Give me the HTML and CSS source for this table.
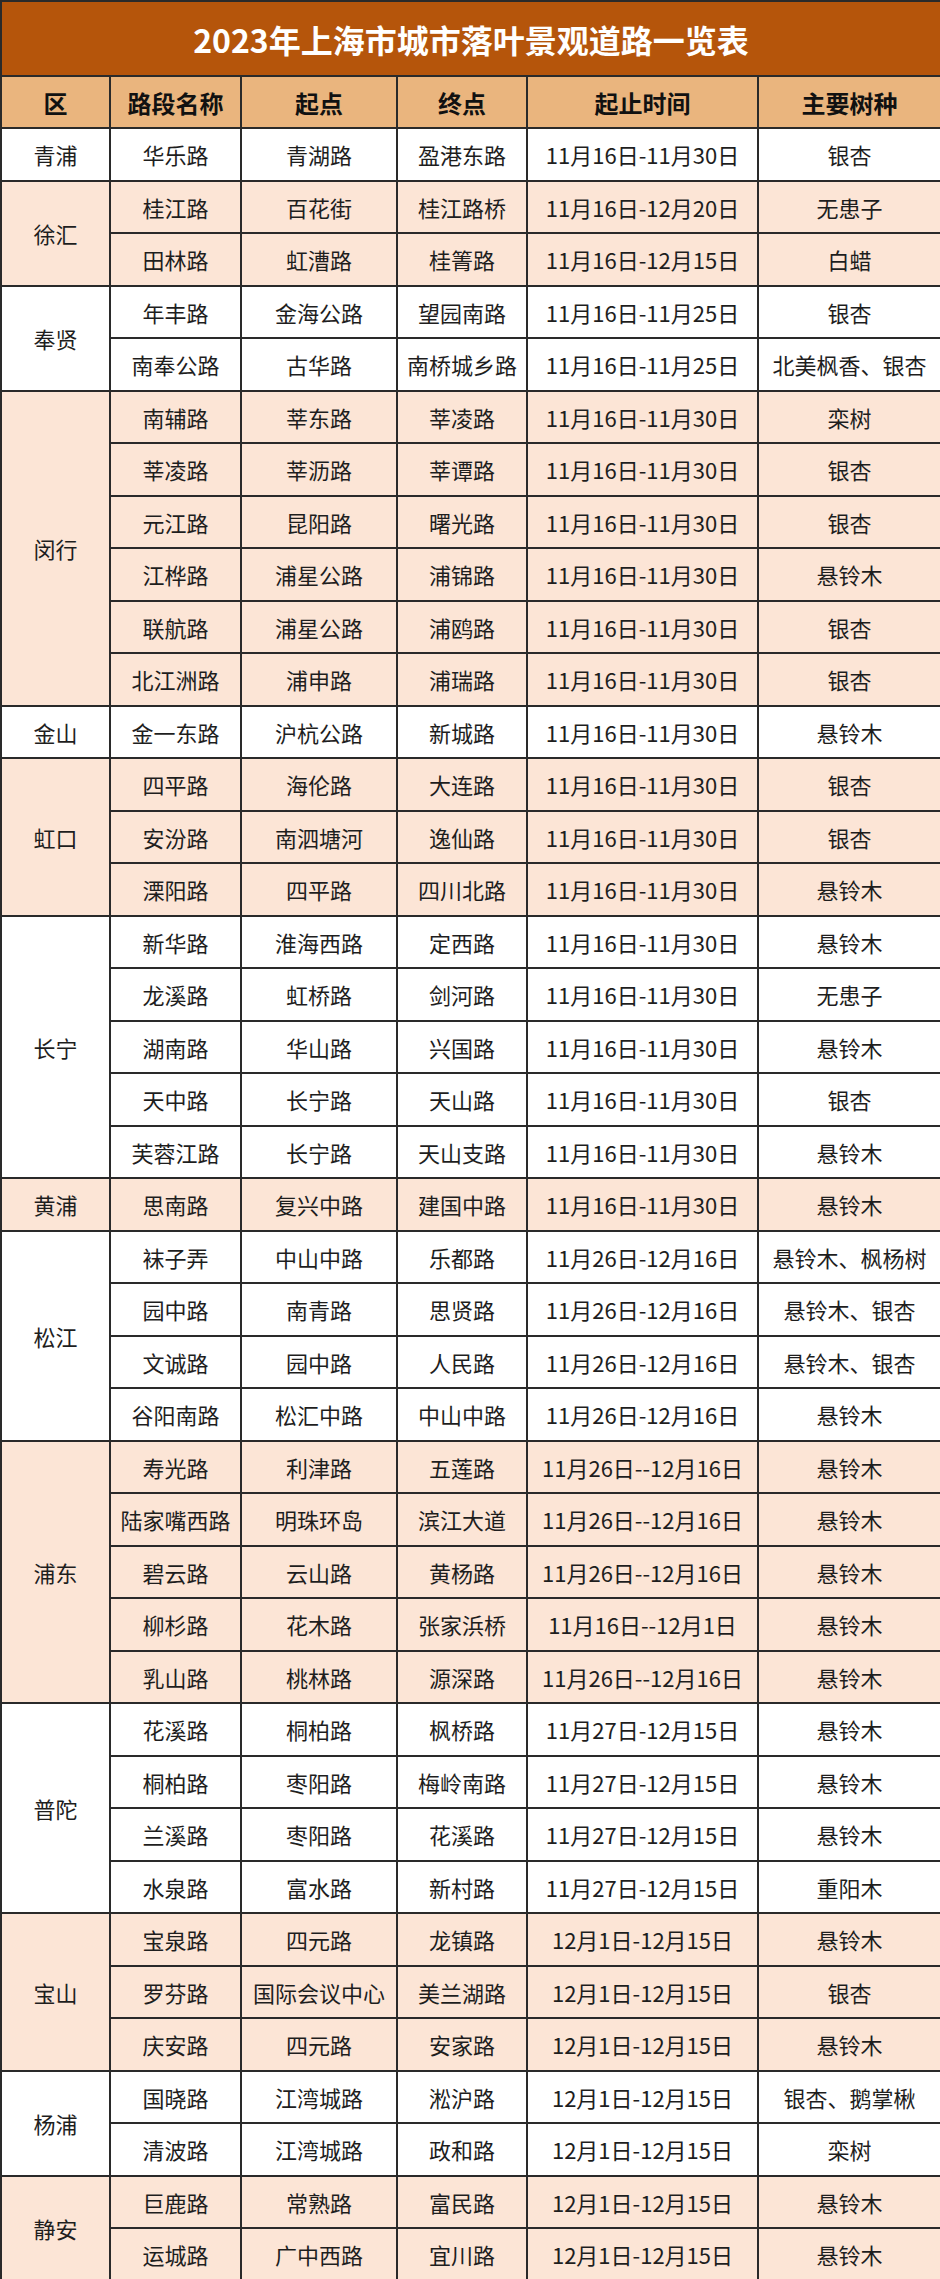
FILE: index.html
```html
<!DOCTYPE html>
<html lang="zh-CN">
<head>
<meta charset="utf-8">
<title>2023年上海市城市落叶景观道路一览表</title>
<link rel="stylesheet" href="styles.css">
</head>
<body>
<table class="sheet">
  <colgroup>
    <col class="c-district"><col class="c-road"><col class="c-start"><col class="c-end"><col class="c-time"><col class="c-tree">
  </colgroup>
  <thead>
    <tr class="title-row"><th colspan="6">2023年上海市城市落叶景观道路一览表</th></tr>
    <tr class="head-row"><th>区</th><th>路段名称</th><th>起点</th><th>终点</th><th>起止时间</th><th>主要树种</th></tr>
  </thead>
  <tbody class="g-white">
    <tr><td>青浦</td><td>华乐路</td><td>青湖路</td><td>盈港东路</td><td>11月16日-11月30日</td><td>银杏</td></tr>
  </tbody>
  <tbody class="g-peach">
    <tr><td rowspan="2">徐汇</td><td>桂江路</td><td>百花街</td><td>桂江路桥</td><td>11月16日-12月20日</td><td>无患子</td></tr>
    <tr><td>田林路</td><td>虹漕路</td><td>桂箐路</td><td>11月16日-12月15日</td><td>白蜡</td></tr>
  </tbody>
  <tbody class="g-white">
    <tr><td rowspan="2">奉贤</td><td>年丰路</td><td>金海公路</td><td>望园南路</td><td>11月16日-11月25日</td><td>银杏</td></tr>
    <tr><td>南奉公路</td><td>古华路</td><td>南桥城乡路</td><td>11月16日-11月25日</td><td>北美枫香、银杏</td></tr>
  </tbody>
  <tbody class="g-peach">
    <tr><td rowspan="6">闵行</td><td>南辅路</td><td>莘东路</td><td>莘凌路</td><td>11月16日-11月30日</td><td>栾树</td></tr>
    <tr><td>莘凌路</td><td>莘沥路</td><td>莘谭路</td><td>11月16日-11月30日</td><td>银杏</td></tr>
    <tr><td>元江路</td><td>昆阳路</td><td>曙光路</td><td>11月16日-11月30日</td><td>银杏</td></tr>
    <tr><td>江桦路</td><td>浦星公路</td><td>浦锦路</td><td>11月16日-11月30日</td><td>悬铃木</td></tr>
    <tr><td>联航路</td><td>浦星公路</td><td>浦鸥路</td><td>11月16日-11月30日</td><td>银杏</td></tr>
    <tr><td>北江洲路</td><td>浦申路</td><td>浦瑞路</td><td>11月16日-11月30日</td><td>银杏</td></tr>
  </tbody>
  <tbody class="g-white">
    <tr><td>金山</td><td>金一东路</td><td>沪杭公路</td><td>新城路</td><td>11月16日-11月30日</td><td>悬铃木</td></tr>
  </tbody>
  <tbody class="g-peach">
    <tr><td rowspan="3">虹口</td><td>四平路</td><td>海伦路</td><td>大连路</td><td>11月16日-11月30日</td><td>银杏</td></tr>
    <tr><td>安汾路</td><td>南泗塘河</td><td>逸仙路</td><td>11月16日-11月30日</td><td>银杏</td></tr>
    <tr><td>溧阳路</td><td>四平路</td><td>四川北路</td><td>11月16日-11月30日</td><td>悬铃木</td></tr>
  </tbody>
  <tbody class="g-white">
    <tr><td rowspan="5">长宁</td><td>新华路</td><td>淮海西路</td><td>定西路</td><td>11月16日-11月30日</td><td>悬铃木</td></tr>
    <tr><td>龙溪路</td><td>虹桥路</td><td>剑河路</td><td>11月16日-11月30日</td><td>无患子</td></tr>
    <tr><td>湖南路</td><td>华山路</td><td>兴国路</td><td>11月16日-11月30日</td><td>悬铃木</td></tr>
    <tr><td>天中路</td><td>长宁路</td><td>天山路</td><td>11月16日-11月30日</td><td>银杏</td></tr>
    <tr><td>芙蓉江路</td><td>长宁路</td><td>天山支路</td><td>11月16日-11月30日</td><td>悬铃木</td></tr>
  </tbody>
  <tbody class="g-peach">
    <tr><td>黄浦</td><td>思南路</td><td>复兴中路</td><td>建国中路</td><td>11月16日-11月30日</td><td>悬铃木</td></tr>
  </tbody>
  <tbody class="g-white">
    <tr><td rowspan="4">松江</td><td>袜子弄</td><td>中山中路</td><td>乐都路</td><td>11月26日-12月16日</td><td>悬铃木、枫杨树</td></tr>
    <tr><td>园中路</td><td>南青路</td><td>思贤路</td><td>11月26日-12月16日</td><td>悬铃木、银杏</td></tr>
    <tr><td>文诚路</td><td>园中路</td><td>人民路</td><td>11月26日-12月16日</td><td>悬铃木、银杏</td></tr>
    <tr><td>谷阳南路</td><td>松汇中路</td><td>中山中路</td><td>11月26日-12月16日</td><td>悬铃木</td></tr>
  </tbody>
  <tbody class="g-peach">
    <tr><td rowspan="5">浦东</td><td>寿光路</td><td>利津路</td><td>五莲路</td><td>11月26日--12月16日</td><td>悬铃木</td></tr>
    <tr><td>陆家嘴西路</td><td>明珠环岛</td><td>滨江大道</td><td>11月26日--12月16日</td><td>悬铃木</td></tr>
    <tr><td>碧云路</td><td>云山路</td><td>黄杨路</td><td>11月26日--12月16日</td><td>悬铃木</td></tr>
    <tr><td>柳杉路</td><td>花木路</td><td>张家浜桥</td><td>11月16日--12月1日</td><td>悬铃木</td></tr>
    <tr><td>乳山路</td><td>桃林路</td><td>源深路</td><td>11月26日--12月16日</td><td>悬铃木</td></tr>
  </tbody>
  <tbody class="g-white">
    <tr><td rowspan="4">普陀</td><td>花溪路</td><td>桐柏路</td><td>枫桥路</td><td>11月27日-12月15日</td><td>悬铃木</td></tr>
    <tr><td>桐柏路</td><td>枣阳路</td><td>梅岭南路</td><td>11月27日-12月15日</td><td>悬铃木</td></tr>
    <tr><td>兰溪路</td><td>枣阳路</td><td>花溪路</td><td>11月27日-12月15日</td><td>悬铃木</td></tr>
    <tr><td>水泉路</td><td>富水路</td><td>新村路</td><td>11月27日-12月15日</td><td>重阳木</td></tr>
  </tbody>
  <tbody class="g-peach">
    <tr><td rowspan="3">宝山</td><td>宝泉路</td><td>四元路</td><td>龙镇路</td><td>12月1日-12月15日</td><td>悬铃木</td></tr>
    <tr><td>罗芬路</td><td>国际会议中心</td><td>美兰湖路</td><td>12月1日-12月15日</td><td>银杏</td></tr>
    <tr><td>庆安路</td><td>四元路</td><td>安家路</td><td>12月1日-12月15日</td><td>悬铃木</td></tr>
  </tbody>
  <tbody class="g-white">
    <tr><td rowspan="2">杨浦</td><td>国晓路</td><td>江湾城路</td><td>淞沪路</td><td>12月1日-12月15日</td><td>银杏、鹅掌楸</td></tr>
    <tr><td>清波路</td><td>江湾城路</td><td>政和路</td><td>12月1日-12月15日</td><td>栾树</td></tr>
  </tbody>
  <tbody class="g-peach">
    <tr><td rowspan="2">静安</td><td>巨鹿路</td><td>常熟路</td><td>富民路</td><td>12月1日-12月15日</td><td>悬铃木</td></tr>
    <tr><td>运城路</td><td>广中西路</td><td>宜川路</td><td>12月1日-12月15日</td><td>悬铃木</td></tr>
  </tbody>
</table>
</body>
</html>
```

FILE: styles.css
```css
html, body {
  margin: 0;
  padding: 0;
  background: #ffffff;
}

body {
  font-family: "Noto Sans CJK SC", "Noto Sans", sans-serif;
  color: #1e1e1e;
}

.sheet {
  width: 940px;
  border-collapse: collapse;
  table-layout: fixed;
  border: 2px solid #262626;
}

.c-district { width: 109px; }
.c-road { width: 131px; }
.c-start { width: 156px; }
.c-end { width: 130px; }
.c-time { width: 231px; }
.c-tree { width: 183px; }

.sheet th,
.sheet td {
  border: 2px solid #2a2a2a;
  text-align: center;
  vertical-align: middle;
  padding: 0;
  white-space: nowrap;
  overflow: hidden;
}

.title-row th {
  height: 73px;
  background: #b5550b;
  color: #ffffff;
  font-size: 32px;
  font-weight: 700;
  letter-spacing: 0;
}

.head-row th {
  height: 50px;
  background: #eab57e;
  color: #111111;
  font-size: 24px;
  font-weight: 700;
}

.sheet td {
  height: 50.5px;
  font-size: 22px;
  font-weight: 400;
  line-height: 1;
}

.g-white td { background: #ffffff; }
.g-peach td { background: #fce5d6; }
```
